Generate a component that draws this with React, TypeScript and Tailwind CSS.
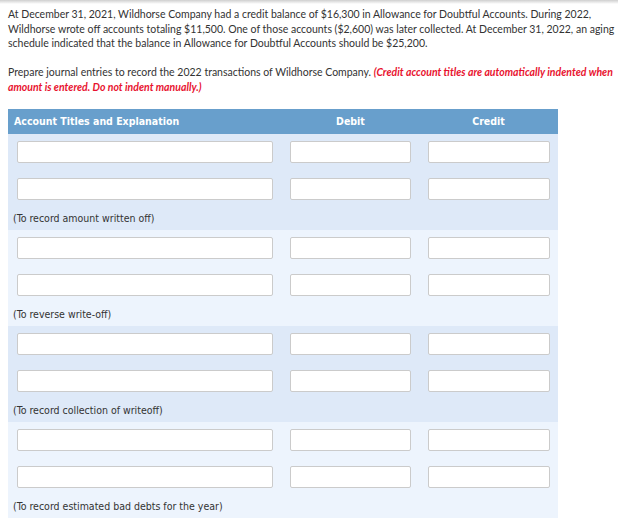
import React from 'react'

interface Entry {
  note: string
}

const entries: Entry[] = [
  { note: '(To record amount written off)' },
  { note: '(To reverse write-off)' },
  { note: '(To record collection of writeoff)' },
  { note: '(To record estimated bad debts for the year)' },
]

const Field: React.FC<{ w: string }> = ({ w }) => (
  <input
    type="text"
    className={`${w} h-[22px] rounded-[2px] border border-[#cbcbcb] bg-white outline-none`}
  />
)

const App: React.FC = () => {
  return (
    <div className="relative h-[532px] w-[618px] overflow-hidden bg-white">
      <div className="h-[4px] bg-gradient-to-b from-[#cfcfcf] to-white" />

      <div className="pl-[8px] pr-[1px] pt-[3px] font-['Lato',sans-serif] text-[10.5px] leading-[14.5px] text-[#333]">
        <p>
          At December 31, 2021, Wildhorse Company had a credit balance of $16,300 in Allowance for Doubtful Accounts. During 2022,
          Wildhorse wrote off accounts totaling $11,500. One of those accounts ($2,600) was later collected. At December 31, 2022, an aging
          schedule indicated that the balance in Allowance for Doubtful Accounts should be $25,200.
        </p>
        <p className="mt-[14.5px]">
          Prepare journal entries to record the 2022 transactions of Wildhorse Company.{' '}
          <span className="font-bold italic text-[#e8132f]">
            (Credit account titles are automatically indented when amount is entered. Do not indent manually.)
          </span>
        </p>
      </div>

      <div className="ml-[8px] mt-[15px] w-[550px] font-['DejaVu_Sans_Condensed','DejaVu_Sans',sans-serif]">
        <div className="grid h-[25px] grid-cols-[274px_137px_139px] items-center bg-[#689fcc] text-[10.5px] font-bold text-white">
          <div className="pl-[6px]">Account Titles and Explanation</div>
          <div className="text-center">Debit</div>
          <div className="text-center">Credit</div>
        </div>

        {entries.map((entry, i) => (
          <div
            key={entry.note}
            className={`h-[96px] pt-[6px] ${i % 2 === 0 ? 'bg-[#dee9f8]' : 'bg-[#edf4fd]'}`}
          >
            <div className="flex flex-col gap-[13px]">
              {[0, 1].map((r) => (
                <div key={r} className="grid grid-cols-[274px_137px_139px]">
                  <div className="pl-[9px]">
                    <Field w="w-[256px]" />
                  </div>
                  <div className="pl-[8px]">
                    <Field w="w-[121px]" />
                  </div>
                  <div className="pl-[9px]">
                    <Field w="w-[122px]" />
                  </div>
                </div>
              ))}
            </div>
            <div className="pl-[5px] pt-[11px] text-[10.5px] leading-[13px] text-[#333]">{entry.note}</div>
          </div>
        ))}
      </div>
    </div>
  )
}

export default App
